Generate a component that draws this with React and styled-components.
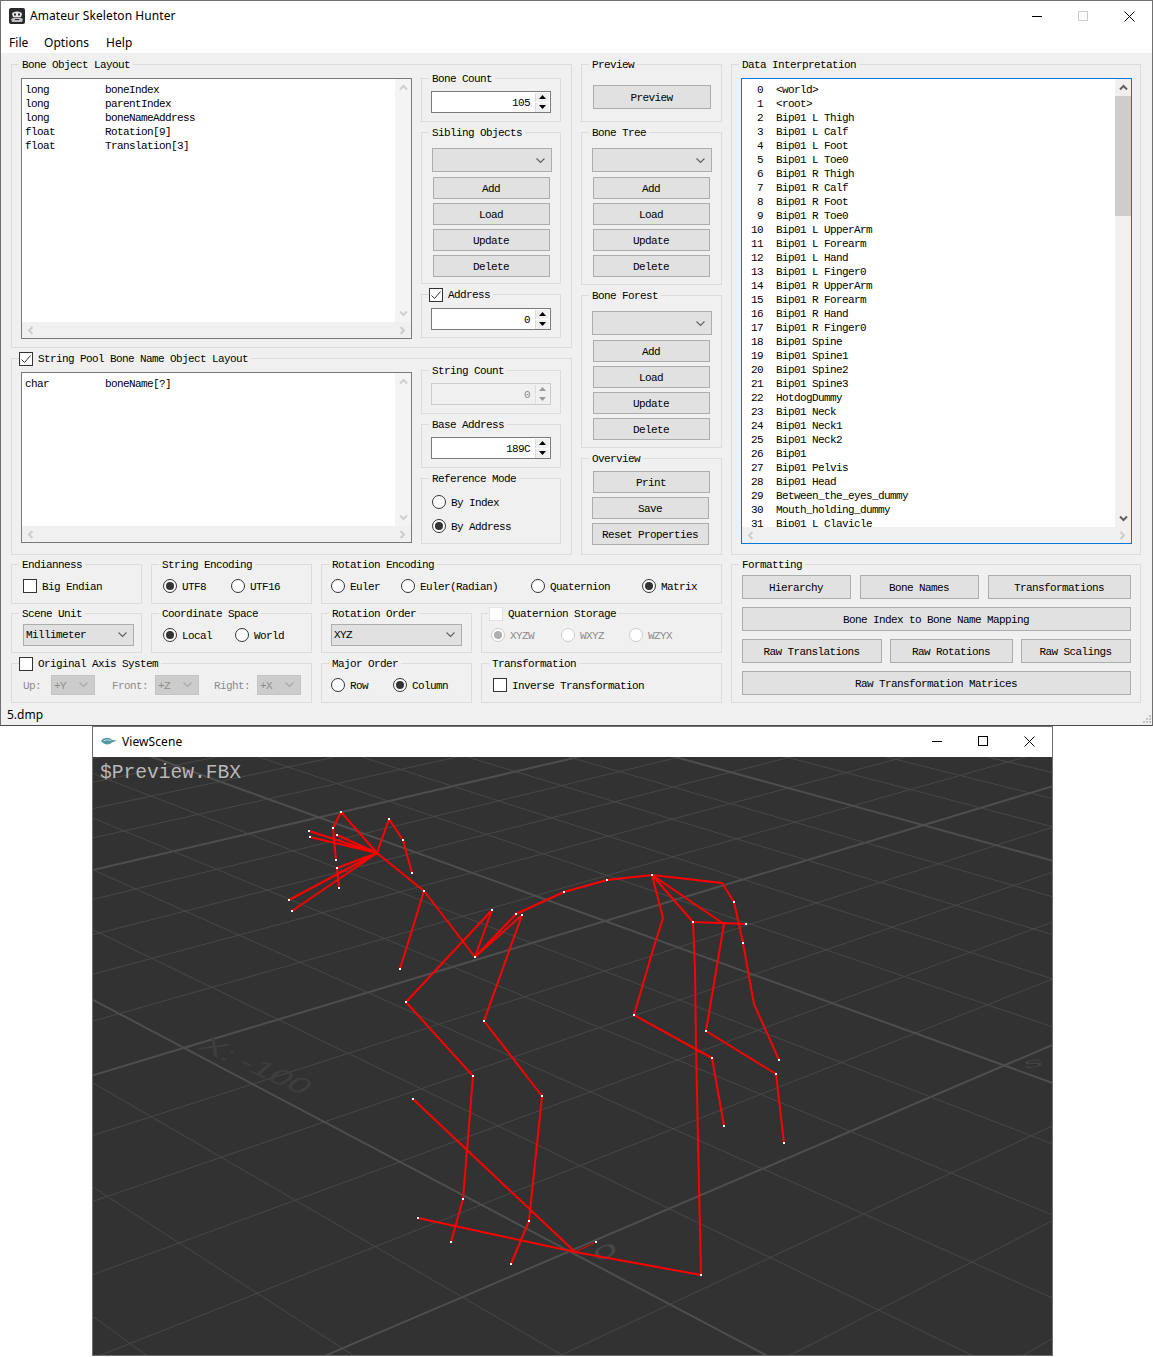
import React from 'react';
import styled, { createGlobalStyle } from 'styled-components';

const GlobalStyle = createGlobalStyle`
  html, body { margin: 0; padding: 0; background: #fff; }
`;

const UI_FONT = `"Noto Sans", "Open Sans", sans-serif`;
const FORM_FONT = `"Liberation Mono", monospace`;

// ---- window chrome ----
const AppWindow = styled.div`
  box-sizing: border-box;
  width: 1153px;
  height: 726px;
  border: 1px solid #707070;
  border-bottom-color: #4a4a4a;
  background: #f0f0f0;
  font-family: ${FORM_FONT};
  font-size: 11px;
  letter-spacing: -0.6px;
  line-height: 14px;
  color: #000;
  overflow: hidden;
`;
const TitleBar = styled.div`
  box-sizing: border-box;
  display: flex;
  align-items: center;
  height: 30px;
  background: #fff;
  padding-left: ${p => p.$pad}px;
  padding-bottom: ${p => p.$lift || 0}px;
`;
const TitleText = styled.div`
  font-family: ${UI_FONT};
  font-size: 12px;
  letter-spacing: 0.08px;
  margin-left: ${p => p.$gap}px;
  flex: 1;
  color: #000;
`;
const WinButton = styled.div`
  width: 46px;
  height: 28px;
  display: flex;
  align-items: center;
  justify-content: center;
`;
const MenuBar = styled.div`
  box-sizing: border-box;
  display: flex;
  height: 22px;
  align-items: center;
  background: #fff;
  font-family: ${UI_FONT};
  font-size: 12px;
  letter-spacing: 0.05px;
  padding: 2px 0 0 8px;
`;
const MenuItem = styled.span`
  width: ${p => p.$w}px;
`;
const Client = styled.div`
  box-sizing: border-box;
  height: 651px;
  padding: 11px 10px 0;
`;
const UpperGrid = styled.div`
  display: grid;
  grid-template-columns: 561px 141px 410px;
  column-gap: 9px;
  height: 491px;
`;
const LowerGrid = styled.div`
  display: grid;
  grid-template-columns: 711px 410px;
  column-gap: 9px;
  margin-top: 9px;
`;
const Column = styled.div`
  display: flex;
  flex-direction: column;
  gap: 10px;
`;
const StatusBar = styled.div`
  position: relative;
  height: 21px;
  display: flex;
  align-items: center;
  padding-left: 6px;
  font-family: ${UI_FONT};
  font-size: 12px;
  letter-spacing: 0;
`;
const Grip = styled.svg`
  position: absolute;
  right: 0;
  bottom: 0;
`;

// ---- group boxes ----
const Group = styled.div`
  position: relative;
  box-sizing: border-box;
  border: 1px solid #dcdcdc;
  height: ${p => p.$h}px;
  padding: ${p => p.$pad || '0'};
  ${p => p.$row && 'display: flex; align-items: center;'}
  ${p => p.$span && `grid-column: span ${p.$span};`}
`;
const GroupTitle = styled.div`
  position: absolute;
  top: -7px;
  left: 7px;
  display: flex;
  align-items: center;
  gap: 5px;
  padding: 0 3px;
  background: #f0f0f0;
  white-space: nowrap;
  ${p => p.$check && 'padding-left: 0;'}
`;
const SplitRow = styled.div`
  display: flex;
  gap: 9px;
  align-items: flex-start;
`;
const SideColumn = styled.div`
  display: flex;
  flex-direction: column;
  gap: 10px;
  width: 140px;
`;
const ButtonStack = styled.div`
  display: flex;
  flex-direction: column;
  gap: 4px;
  margin: 5px 0 0 1px;
`;
const Stacked = styled.div`
  display: flex;
  flex-direction: column;
  gap: 4px;
`;
const StackedButton = styled.div`
  margin-left: ${p => p.$ml || 0}px;
`;

// ---- controls ----
const Caption = styled.span`
  padding-top: ${p => (p.$flat ? 0 : 2)}px;
`;
const Button = styled.div`
  box-sizing: border-box;
  width: ${p => (p.$w ? `${p.$w}px` : '100%')};
  height: ${p => p.$h || 22}px;
  flex: none;
  display: flex;
  align-items: center;
  justify-content: center;
  padding: 2px 1px 0 0;
  background: #e1e1e1;
  border: 1px solid #adadad;
  white-space: nowrap;
`;
const ComboBox = styled.div`
  box-sizing: border-box;
  width: ${p => p.$w}px;
  height: ${p => p.$h}px;
  flex: none;
  display: flex;
  align-items: center;
  justify-content: space-between;
  padding: 0 5px 0 2px;
  background: ${p => (p.$off ? '#cccccc' : '#e1e1e1')};
  border: 1px solid ${p => (p.$off ? '#c4c4c4' : '#adadad')};
  color: ${p => (p.$off ? '#8c8c8c' : '#000')};
`;
const SpinWrap = styled.div`
  box-sizing: border-box;
  width: 120px;
  height: 22px;
  display: flex;
  align-items: center;
  justify-content: flex-end;
  padding-right: 1px;
  gap: 5px;
  background: ${p => (p.$off ? '#f0f0f0' : '#fff')};
  border: 1px solid ${p => (p.$off ? '#cccccc' : '#7a7a7a')};
  color: ${p => (p.$off ? '#8c8c8c' : '#000')};
`;
const SpinButtons = styled.div`
  display: flex;
  flex-direction: column;
  gap: 1px;
`;
const SpinButton = styled.div`
  width: 14px;
  height: 9px;
  display: flex;
  align-items: center;
  justify-content: center;
  background: #f0f0f0;
  border-left: 1px solid #dcdcdc;
  box-sizing: border-box;
`;
const CheckBox = styled.div`
  box-sizing: border-box;
  width: 14px;
  height: 14px;
  flex: none;
  display: flex;
  align-items: center;
  justify-content: center;
  background: #fff;
  border: 1px solid ${p => (p.$off ? '#e4e4e4' : '#333')};
`;
const RadioDot = styled.div`
  box-sizing: border-box;
  width: 14px;
  height: 14px;
  flex: none;
  border-radius: 50%;
  display: flex;
  align-items: center;
  justify-content: center;
  background: #fff;
  border: 1px solid ${p => (p.$off ? '#cccccc' : '#333')};
  &::after {
    content: '';
    display: ${p => (p.$on ? 'block' : 'none')};
    width: 8px;
    height: 8px;
    border-radius: 50%;
    background: ${p => (p.$off ? '#b0b0b0' : '#333')};
  }
`;
const Option = styled.div`
  display: flex;
  align-items: center;
  gap: 5px;
  flex: none;
  width: ${p => (p.$w ? `${p.$w}px` : 'auto')};
  color: ${p => (p.$off ? '#8c8c8c' : '#000')};
  white-space: nowrap;
`;
const RefModeList = styled.div`
  display: flex;
  flex-direction: column;
  gap: 8px;
`;
const AxisLabel = styled.span`
  color: #8c8c8c;
  flex: none;
  padding-top: 2px;
  width: ${p => p.$w}px;
  margin-left: ${p => p.$ml || 0}px;
`;
const FormatRow = styled.div`
  display: flex;
  gap: ${p => p.$gap || 0}px;
`;
const FormatStack = styled.div`
  display: flex;
  flex-direction: column;
  gap: 8px;
`;

// ---- scroll views ----
const ScrollView = styled.div`
  box-sizing: border-box;
  flex: none;
  width: 391px;
  height: ${p => p.$h}px;
  margin-top: ${p => p.$mt || 0}px;
  display: grid;
  grid-template-columns: 373px 16px;
  grid-template-rows: minmax(0, 1fr) 16px;
  background: #fff;
  border: 1px solid ${p => (p.$focus ? '#0078d7' : '#7a7a7a')};
`;
const ScrollContent = styled.div`
  overflow: hidden;
  padding: 4px 0 0 ${p => p.$left}px;
  min-width: 0;
  white-space: pre;
`;
const VBar = styled.div`
  display: flex;
  flex-direction: column;
  justify-content: space-between;
  background: ${p => (p.$active ? '#f0f0f0' : '#f4f4f4')};
`;
const Thumb = styled.div`
  height: 120px;
  background: #cdcdcd;
  margin-bottom: auto;
`;
const HBar = styled.div`
  grid-column: span 2;
  display: flex;
  justify-content: space-between;
  align-items: center;
  background: #f0f0f0;
`;
const ArrowCell = styled.div`
  width: ${p => (p.$h ? 17 : 16)}px;
  height: ${p => (p.$h ? 16 : 17)}px;
  display: flex;
  align-items: center;
  justify-content: center;
`;
const LayoutLine = styled.div`
  display: flex;
  height: 14px;
`;
const LayoutType = styled.span`
  width: 80px;
`;
const DataRow = styled.div`
  display: flex;
  height: 14px;
`;
const DataIndex = styled.span`
  width: 21px;
  text-align: right;
  margin-right: 13px;
`;

// ---- scene window ----
const SceneWindow = styled.div`
  box-sizing: border-box;
  width: 961px;
  height: 630px;
  margin-left: 92px;
  border: 1px solid #707070;
  background: #fff;
`;
const SceneCanvas = styled.div`
  position: relative;
  width: 959px;
  height: 598px;
  background: #323232;
  overflow: hidden;
`;
const SceneName = styled.div`
  position: absolute;
  left: 7px;
  top: 5px;
  font-family: ${FORM_FONT};
  font-size: 19.6px;
  line-height: 22px;
  color: #b8b8b8;
`;
const SceneSvg = styled.svg`
  display: block;
`;

// ---- small drawings ----
const Chevron = ({ color = '#606060' }) => (
  <svg width="11" height="11" viewBox="0 0 11 11">
    <path d="M1.5 3.5 L5.5 7.5 L9.5 3.5" fill="none" stroke={color} strokeWidth="1.1" />
  </svg>
);
const ScrollArrow = ({ dir, color }) => (
  <svg width="11" height="11" viewBox="0 0 11 11">
    <path
      d={
        {
          down: 'M2 3.5 L5.5 7 L9 3.5',
          up: 'M2 7.5 L5.5 4 L9 7.5',
          left: 'M7.5 2 L4 5.5 L7.5 9',
          right: 'M3.5 2 L7 5.5 L3.5 9',
        }[dir]
      }
      fill="none"
      stroke={color}
      strokeWidth="2"
    />
  </svg>
);
const Tick = () => (
  <svg width="12" height="12" viewBox="0 0 12 12">
    <path d="M1.5 6.5 L4.5 9.5 L10.5 2.5" fill="none" stroke="#333" strokeWidth="1" />
  </svg>
);
const Tri = ({ up, color = '#000' }) => (
  <svg width="7" height="4" viewBox="0 0 7 4">
    <path d={up ? 'M3.5 0 L7 4 L0 4 Z' : 'M0 0 L7 0 L3.5 4 Z'} fill={color} />
  </svg>
);
const AppIcon = () => (
  <svg width="16" height="16" viewBox="0 0 16 16">
    <rect x="0" y="0" width="16" height="16" rx="2" fill="#2a2a2a" />
    <path d="M3 6 C3 2.5 13 2.5 13 6 L12 9 L4 9 Z" fill="#e8e8e8" />
    <path d="M2 11 L5 9.5 L11 9.5 L14 11 L13 14 L3 14 Z" fill="#bdbdbd" />
    <rect x="5" y="5.5" width="2" height="2" fill="#2a2a2a" />
    <rect x="9" y="5.5" width="2" height="2" fill="#2a2a2a" />
    <rect x="6" y="11" width="4" height="1" fill="#2a2a2a" />
  </svg>
);
const FishIcon = () => (
  <svg width="16" height="9" viewBox="0 0 16 9">
    <path d="M0 4 C3 0 8 0 11 3 L16 3.5 L11 5.5 C8 8.5 3 8 0 4 Z" fill="#4f97a3" />
    <path d="M2.5 4 C5 2.5 8 2.5 10 4" fill="none" stroke="#c9e3e8" strokeWidth="1" />
  </svg>
);
const WinControls = ({ maxColor = '#000' }) => (
  <>
    <WinButton>
      <svg width="10" height="10" viewBox="0 0 10 10">
        <path d="M0 5.5 H10" stroke="#000" strokeWidth="1" />
      </svg>
    </WinButton>
    <WinButton>
      <svg width="10" height="10" viewBox="0 0 10 10">
        <rect x="0.5" y="0.5" width="9" height="9" fill="none" stroke={maxColor} strokeWidth="1" />
      </svg>
    </WinButton>
    <WinButton>
      <svg width="11" height="11" viewBox="0 0 11 11">
        <path d="M0.5 0.5 L10.5 10.5 M10.5 0.5 L0.5 10.5" stroke="#000" strokeWidth="1" />
      </svg>
    </WinButton>
  </>
);

// ---- composite controls ----
const Combo = ({ w, h = 24, off, value }) => (
  <ComboBox $w={w} $h={h} $off={off}>
    <Caption $flat={h === 22}>{value}</Caption>
    <Chevron color={off ? '#a8a8a8' : '#606060'} />
  </ComboBox>
);
const Spin = ({ value, off }) => (
  <SpinWrap $off={off}>
    <Caption>{value}</Caption>
    <SpinButtons>
      <SpinButton>
        <Tri up color={off ? '#9a9a9a' : '#000'} />
      </SpinButton>
      <SpinButton>
        <Tri color={off ? '#9a9a9a' : '#000'} />
      </SpinButton>
    </SpinButtons>
  </SpinWrap>
);
const Radio = ({ label, on, off, w }) => (
  <Option $w={w} $off={off}>
    <RadioDot $on={on} $off={off} />
    <Caption>{label}</Caption>
  </Option>
);
const Check = ({ label, on, off }) => (
  <Option>
    <CheckBox $off={off}>{on && <Tick />}</CheckBox>
    <Caption>{label}</Caption>
  </Option>
);
const Title = ({ children, check, on, off }) => (
  <GroupTitle $check={check}>
    {check && (
      <CheckBox $off={off}>{on && <Tick />}</CheckBox>
    )}
    {children}
  </GroupTitle>
);
const EditBox = ({ h, mt, focus, children, left, thumb }) => {
  const c = focus ? '#606060' : '#d0d0d0';
  return (
    <ScrollView $h={h} $mt={mt} $focus={focus}>
      <ScrollContent $left={left}>{children}</ScrollContent>
      <VBar $active={focus}>
        <ArrowCell>
          <ScrollArrow dir="up" color={c} />
        </ArrowCell>
        {thumb && <Thumb />}
        <ArrowCell>
          <ScrollArrow dir="down" color={c} />
        </ArrowCell>
      </VBar>
      <HBar>
        <ArrowCell $h>
          <ScrollArrow dir="left" color="#cdcdcd" />
        </ArrowCell>
        <ArrowCell $h>
          <ScrollArrow dir="right" color="#cdcdcd" />
        </ArrowCell>
      </HBar>
    </ScrollView>
  );
};
const ObjectButtons = () => (
  <ButtonStack>
    {['Add', 'Load', 'Update', 'Delete'].map(t => (
      <Button key={t} $w={117}>
        {t}
      </Button>
    ))}
  </ButtonStack>
);
const ObjectGroup = ({ title, h }) => (
  <Group $h={h} $pad="15px 0 0 10px">
    <Title>{title}</Title>
    <Combo w={120} />
    <ObjectButtons />
  </Group>
);

// ---- data ----
const BONE_LAYOUT = [
  ['long', 'boneIndex'],
  ['long', 'parentIndex'],
  ['long', 'boneNameAddress'],
  ['float', 'Rotation[9]'],
  ['float', 'Translation[3]'],
];
const BONES = [
  '<world>', '<root>', 'Bip01 L Thigh', 'Bip01 L Calf', 'Bip01 L Foot', 'Bip01 L Toe0',
  'Bip01 R Thigh', 'Bip01 R Calf', 'Bip01 R Foot', 'Bip01 R Toe0', 'Bip01 L UpperArm',
  'Bip01 L Forearm', 'Bip01 L Hand', 'Bip01 L Finger0', 'Bip01 R UpperArm', 'Bip01 R Forearm',
  'Bip01 R Hand', 'Bip01 R Finger0', 'Bip01 Spine', 'Bip01 Spine1', 'Bip01 Spine2',
  'Bip01 Spine3', 'HotdogDummy', 'Bip01 Neck', 'Bip01 Neck1', 'Bip01 Neck2', 'Bip01',
  'Bip01 Pelvis', 'Bip01 Head', 'Between_the_eyes_dummy', 'Mouth_holding_dummy', 'Bip01 L Clavicle',
];

// grid lines are given by their height at x=1050, all meet in one vanishing point
const VP_A = [3105, 168];
const VP_B = [-1500, 159];
const RISING = [1340, 1222, 1127, 1046, 980, 923, 873, 828, 787, 750, 718, 691, 667, 647, 625, 605, 587, 571];
const FALLING = [772, 798, 826, 860, 896, 934, 978, 1026, 1082, 1143, 1214, 1297, 1393, 1505, 1638, 1805, 2012];
const STRONG_RISING = [1046, 787, 647];
const STRONG_FALLING = [860, 1082, 1505];
const gridLine = ([vx, vy], y, x) => vy + ((y - vy) * (vx - x)) / (vx - 1050);

const BONE_PATHS = [
  [[377, 853], [341, 812], [333, 828], [336, 860]],
  [[377, 853], [389, 819], [403, 840], [412, 873]],
  [[377, 853], [309, 831]],
  [[377, 853], [310, 837]],
  [[377, 853], [337, 835]],
  [[377, 853], [337, 868], [339, 888]],
  [[377, 853], [289, 900]],
  [[377, 853], [292, 911]],
  [[377, 853], [424, 891], [400, 969]],
  [[424, 891], [475, 957], [492, 910], [406, 1002], [473, 1076], [463, 1199], [451, 1242]],
  [[475, 957], [516, 914], [564, 892], [607, 880], [652, 875]],
  [[475, 957], [522, 915], [484, 1021], [542, 1096], [529, 1221], [511, 1264]],
  [[652, 875], [722, 883], [734, 902], [743, 943], [754, 1004], [779, 1060]],
  [[652, 875], [663, 918], [652, 953], [634, 1015], [712, 1058], [724, 1126]],
  [[652, 875], [693, 922], [746, 924]],
  [[652, 875], [724, 924], [706, 1031], [776, 1074], [784, 1143]],
  [[693, 922], [695, 969], [696, 1046], [698, 1140], [701, 1275], [575, 1252], [418, 1218]],
  [[575, 1252], [413, 1099]],
];
const BONE_NODES = [
  [341, 812], [333, 828], [336, 860], [389, 819], [403, 840], [412, 873], [309, 831], [310, 837], [337, 835],
  [337, 868], [339, 888], [289, 900], [292, 911], [424, 891], [400, 969], [475, 957], [492, 910], [406, 1002],
  [473, 1076], [463, 1199], [451, 1242], [516, 914], [522, 915], [564, 892], [607, 880], [652, 875], [484, 1021],
  [542, 1096], [529, 1221], [511, 1264], [734, 902], [743, 943], [779, 1060], [634, 1015], [712, 1058], [724, 1126],
  [693, 922], [746, 924], [706, 1031], [776, 1074], [784, 1143], [701, 1275], [418, 1218], [413, 1099], [596, 1242],
];

const Scene = () => (
  <SceneSvg width="959" height="598" viewBox="93 757 959 598">
    {RISING.map(y => (
      <line
        key={`r${y}`}
        x1="93"
        x2="1052"
        y1={gridLine(VP_A, y, 93)}
        y2={gridLine(VP_A, y, 1052)}
        stroke={STRONG_RISING.includes(y) ? '#4e4e4e' : '#484848'}
        strokeWidth={STRONG_RISING.includes(y) ? 2 : 1}
      />
    ))}
    {FALLING.map(y => (
      <line
        key={`f${y}`}
        x1="93"
        x2="1052"
        y1={gridLine(VP_B, y, 93)}
        y2={gridLine(VP_B, y, 1052)}
        stroke={STRONG_FALLING.includes(y) ? '#4e4e4e' : '#484848'}
        strokeWidth={STRONG_FALLING.includes(y) ? 2 : 1}
      />
    ))}
    <text
      transform="translate(196 1048) rotate(24) skewX(-25) scale(1.5 1)"
      fontFamily="Liberation Sans, sans-serif"
      fontSize="24"
      fill="#3e3e3e"
    >
      X: -100
    </text>
    <text
      transform="translate(596 1262) rotate(-22) scale(2.2 0.9)"
      fontFamily="Liberation Sans, sans-serif"
      fontSize="20"
      fill="#474747"
    >
      0
    </text>
    <text
      transform="translate(1024 1069) rotate(-10) scale(1.6 0.6)"
      fontFamily="Liberation Sans, sans-serif"
      fontSize="18"
      fill="#444"
    >
      S
    </text>
    {BONE_PATHS.map((pts, i) => (
      <polyline
        key={i}
        points={pts.map(p => p.join(',')).join(' ')}
        fill="none"
        stroke="#ff0000"
        strokeWidth="2"
        strokeLinejoin="round"
      />
    ))}
    <line x1="575" y1="1252" x2="596" y2="1242" stroke="#ff0000" strokeWidth="1" />
    {BONE_NODES.map(([x, y]) => (
      <rect key={`${x}-${y}`} x={x - 1} y={y - 1} width="2" height="2" fill="#fff" />
    ))}
  </SceneSvg>
);

const FormLayout = styled.div`
  display: grid;
  grid-template-columns: 131px 161px 151px 241px;
  grid-template-rows: 40px 41px 40px;
  gap: 9px;
`;

function FormGrid() {
  return (
    <FormLayout>
      <Group $h={40} $row $pad="3px 0 0 11px">
        <Title>Endianness</Title>
        <Check label="Big Endian" />
      </Group>
      <Group $h={40} $row $pad="3px 0 0 11px">
        <Title>String Encoding</Title>
        <Radio label="UTF8" on w={68} />
        <Radio label="UTF16" />
      </Group>
      <Group $h={40} $row $span={2} $pad="3px 0 0 9px">
        <Title>Rotation Encoding</Title>
        <Radio label="Euler" w={70} />
        <Radio label="Euler(Radian)" w={130} />
        <Radio label="Quaternion" w={111} />
        <Radio label="Matrix" on />
      </Group>
      <Group $h={40} $row $pad="3px 0 0 11px">
        <Title>Scene Unit</Title>
        <Combo w={111} h={22} value="Millimeter" />
      </Group>
      <Group $h={40} $row $pad="3px 0 0 11px">
        <Title>Coordinate Space</Title>
        <Radio label="Local" on w={72} />
        <Radio label="World" />
      </Group>
      <Group $h={40} $row $pad="3px 0 0 9px">
        <Title>Rotation Order</Title>
        <Combo w={131} h={22} value="XYZ" />
      </Group>
      <Group $h={40} $row $pad="3px 0 0 9px">
        <Title check off>
          Quaternion Storage
        </Title>
        <Radio label="XYZW" on off w={70} />
        <Radio label="WXYZ" off w={68} />
        <Radio label="WZYX" off />
      </Group>
      <Group $h={40} $row $span={2} $pad="3px 0 0 11px">
        <Title check>Original Axis System</Title>
        <AxisLabel $w={28}>Up:</AxisLabel>
        <Combo w={44} h={20} off value="+Y" />
        <AxisLabel $w={43} $ml={17}>Front:</AxisLabel>
        <Combo w={44} h={20} off value="+Z" />
        <AxisLabel $w={43} $ml={15}>Right:</AxisLabel>
        <Combo w={44} h={20} off value="+X" />
      </Group>
      <Group $h={40} $row $pad="3px 0 0 9px">
        <Title>Major Order</Title>
        <Radio label="Row" w={62} />
        <Radio label="Column" on />
      </Group>
      <Group $h={40} $row $pad="3px 0 0 11px">
        <Title>Transformation</Title>
        <Check label="Inverse Transformation" />
      </Group>
    </FormLayout>
  );
}

export default function App() {
  return (
    <>
      <GlobalStyle />
      <AppWindow>
        <TitleBar $pad={8}>
          <AppIcon />
          <TitleText $gap={5}>Amateur Skeleton Hunter</TitleText>
          <WinControls maxColor="#cccccc" />
        </TitleBar>
        <MenuBar>
          <MenuItem $w={35}>File</MenuItem>
          <MenuItem $w={62}>Options</MenuItem>
          <MenuItem $w={40}>Help</MenuItem>
        </MenuBar>
        <Client>
          <UpperGrid>
            <Column>
              <Group $h={284} $pad="13px 10px 0 9px">
                <Title>Bone Object Layout</Title>
                <SplitRow>
                  <EditBox h={261} left={3}>
                    {BONE_LAYOUT.map(([t, n]) => (
                      <LayoutLine key={n}>
                        <LayoutType>{t}</LayoutType>
                        {n}
                      </LayoutLine>
                    ))}
                  </EditBox>
                  <SideColumn>
                    <Group $h={44} $pad="12px 0 0 9px">
                      <Title>Bone Count</Title>
                      <Spin value="105" />
                    </Group>
                    <Group $h={152} $pad="15px 0 0 10px">
                      <Title>Sibling Objects</Title>
                      <Combo w={120} />
                      <ObjectButtons />
                    </Group>
                    <Group $h={44} $pad="13px 0 0 9px">
                      <Title check on>
                        Address
                      </Title>
                      <Spin value="0" />
                    </Group>
                  </SideColumn>
                </SplitRow>
              </Group>
              <Group $h={197} $pad="11px 10px 0 9px">
                <Title check on>
                  String Pool Bone Name Object Layout
                </Title>
                <SplitRow>
                  <EditBox h={171} mt={2} left={3}>
                    <LayoutLine>
                      <LayoutType>char</LayoutType>
                      boneName[?]
                    </LayoutLine>
                  </EditBox>
                  <SideColumn>
                    <Group $h={44} $pad="12px 0 0 9px">
                      <Title>String Count</Title>
                      <Spin value="0" off />
                    </Group>
                    <Group $h={44} $pad="12px 0 0 9px">
                      <Title>Base Address</Title>
                      <Spin value="189C" />
                    </Group>
                    <Group $h={66} $pad="15px 0 0 10px">
                      <Title>Reference Mode</Title>
                      <RefModeList>
                        <Radio label="By Index" />
                        <Radio label="By Address" on />
                      </RefModeList>
                    </Group>
                  </SideColumn>
                </SplitRow>
              </Group>
            </Column>
            <Column>
              <Group $h={58} $pad="20px 0 0 11px">
                <Title>Preview</Title>
                <Button $w={118} $h={24}>
                  Preview
                </Button>
              </Group>
              <ObjectGroup title="Bone Tree" h={153} />
              <ObjectGroup title="Bone Forest" h={153} />
              <Group $h={97} $pad="12px 0 0 10px">
                <Title>Overview</Title>
                <Stacked>
                  <StackedButton $ml={1}>
                    <Button $w={117}>Print</Button>
                  </StackedButton>
                  <Button $w={117}>Save</Button>
                  <Button $w={117}>Reset Properties</Button>
                </Stacked>
              </Group>
            </Column>
            <Group $h={491} $pad="13px 0 0 9px">
              <Title>Data Interpretation</Title>
              <EditBox h={466} focus thumb left={0}>
                {BONES.map((b, i) => (
                  <DataRow key={i}>
                    <DataIndex>{i}</DataIndex>
                    {b}
                  </DataRow>
                ))}
              </EditBox>
            </Group>
          </UpperGrid>
          <LowerGrid>
            <FormGrid />
            <Group $h={139} $pad="10px 0 0 10px">
              <Title>Formatting</Title>
              <FormatStack>
                <FormatRow $gap={9}>
                  <Button $w={109} $h={24}>Hierarchy</Button>
                  <Button $w={119} $h={24}>Bone Names</Button>
                  <Button $w={143} $h={24}>Transformations</Button>
                </FormatRow>
                <Button $w={389} $h={24}>Bone Index to Bone Name Mapping</Button>
                <FormatRow $gap={8}>
                  <Button $w={140} $h={24}>Raw Translations</Button>
                  <Button $w={123} $h={24}>Raw Rotations</Button>
                  <Button $w={110} $h={24}>Raw Scalings</Button>
                </FormatRow>
                <Button $w={389} $h={24}>Raw Transformation Matrices</Button>
              </FormatStack>
            </Group>
          </LowerGrid>
        </Client>
        <StatusBar>
          5.dmp
          <Grip width="12" height="12" viewBox="0 0 12 12">
            <path d="M9 2h2v2H9zM6 5h2v2H6zM9 5h2v2H9zM3 8h2v2H3zM6 8h2v2H6zM9 8h2v2H9z" fill="#c4c4c4" />
          </Grip>
        </StatusBar>
      </AppWindow>
      <SceneWindow>
        <TitleBar $pad={8} $lift={2}>
          <FishIcon />
          <TitleText $gap={5}>ViewScene</TitleText>
          <WinControls />
        </TitleBar>
        <SceneCanvas>
          <Scene />
          <SceneName>$Preview.FBX</SceneName>
        </SceneCanvas>
      </SceneWindow>
    </>
  );
}
